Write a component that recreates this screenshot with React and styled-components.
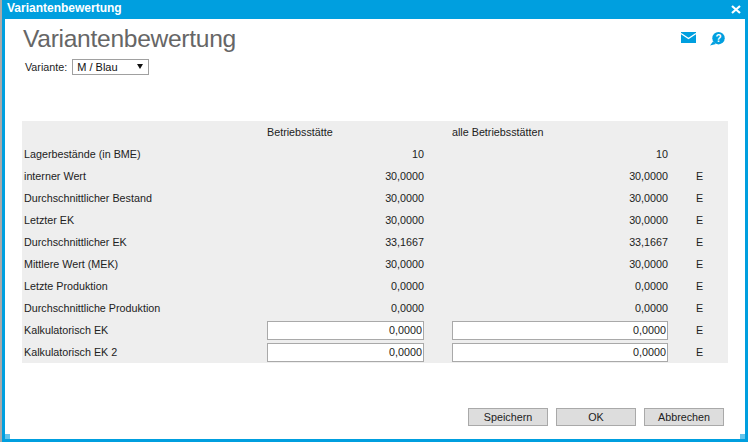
import React from "react";
import styled, { createGlobalStyle } from "styled-components";

const Global = createGlobalStyle`
  html, body { margin: 0; padding: 0; height: 100%; background: #a9a9a9; overflow: hidden; }
  body { font-family: "Liberation Sans", Arial, sans-serif; }
`;

const Dialog = styled.div`
  position: relative;
  box-sizing: border-box;
  width: 746px;
  height: 442px;
  margin-left: 2px;
  display: flex;
  flex-direction: column;
  background: #fff;
  border-style: solid;
  border-color: #009fdf;
  border-width: 0 3px 3px 3px;
`;

const TitleBar = styled.div`
  height: 19px;
  margin: 0 -3px;
  padding: 0 7px 0 5px;
  display: flex;
  align-items: center;
  justify-content: space-between;
  background: #009fdf;
  color: #fff;
  font-size: 12px;
  font-weight: bold;
`;

const TitleText = styled.span`
  margin-bottom: 4px;
`;

const Content = styled.div`
  flex: 1;
  display: flex;
  flex-direction: column;
  padding: 0 17px 13px 17px;
`;

const HeadRow = styled.div`
  display: flex;
  justify-content: space-between;
  align-items: flex-start;
  height: 39px;
`;

const Heading = styled.h1`
  margin: 4px 0 0 1px;
  font-size: 24.6px;
  letter-spacing: -0.3px;
  line-height: 32px;
  font-weight: normal;
  color: #666;
`;

const Icons = styled.div`
  display: flex;
  gap: 14px;
  margin: 13px 3px 0 0;
  align-items: flex-start;
`;

const VariantRow = styled.label`
  display: flex;
  align-items: center;
  gap: 5px;
  margin-left: 3px;
  height: 16px;
  margin-top: 1px;
  font-size: 10.75px;
  color: #222;
`;

const SelectWrap = styled.span`
  position: relative;
  display: block;
  width: 77px;
  height: 16px;
`;

const Select = styled.select`
  appearance: none;
  box-sizing: border-box;
  display: block;
  width: 100%;
  height: 100%;
  margin: 0;
  padding: 0 0 0 4px;
  border: 1px solid #a0a0a0;
  border-radius: 0;
  background: #fff;
  font: 11px "Liberation Sans", Arial, sans-serif;
  color: #111;
`;

const Arrow = styled.svg`
  position: absolute;
  right: 6px;
  top: 5px;
  pointer-events: none;
`;

const Table = styled.div`
  margin-top: 46px;
  background: #eee;
  font-size: 10.75px;
  color: #222;
`;

const Row = styled.div`
  display: grid;
  grid-template-columns: 245px 157px 28px 216px 1fr;
  height: 22px;
  align-items: center;
`;

const Label = styled.div`
  padding-left: 2px;
`;

const ColHead = styled.div``;

const Value = styled.div`
  text-align: right;
`;

const Unit = styled.div`
  grid-column: 5;
  padding-left: 28px;
`;

const NumberInput = styled.input`
  box-sizing: border-box;
  display: block;
  width: 100%;
  height: 19px;
  margin: 0;
  padding: 0 1px 0 2px;
  border: 1px solid #a9a9a9;
  border-radius: 0;
  background: #fff;
  outline: none;
  text-align: right;
  font: 10.75px "Liberation Sans", Arial, sans-serif;
  color: #222;
`;

const Footer = styled.div`
  margin-top: auto;
  display: flex;
  justify-content: flex-end;
  gap: 8px;
  padding-right: 4px;
`;

const Button = styled.button`
  box-sizing: border-box;
  width: 80px;
  height: 18px;
  margin: 0;
  padding: 0;
  border: 1px solid #a9a9a9;
  border-radius: 0;
  background: #ddd;
  font: 10.75px "Liberation Sans", Arial, sans-serif;
  color: #222;
`;

const Handle = styled.div`
  position: absolute;
  bottom: 0;
  ${(p) => (p.$side === "left" ? "left: 0;" : "right: 0;")}
  width: 5px;
  height: 5px;
  background: #66c5ec;
`;

const CloseIcon = () => (
  <svg width="10" height="9" viewBox="0 0 10 9" style={{ display: "block" }}>
    <path d="M1 1l8 7M9 1L1 8" stroke="#fff" strokeWidth="2.2" />
  </svg>
);

const MailIcon = () => (
  <svg width="15" height="11" viewBox="0 0 15 11" style={{ display: "block" }}>
    <rect width="15" height="11" fill="#009fdf" />
    <path d="M0 1.5l7.5 5 7.5-5" fill="none" stroke="#fff" strokeWidth="1.3" />
  </svg>
);

const HelpIcon = () => (
  <svg width="15" height="14" viewBox="0 0 15 14" style={{ display: "block" }}>
    <circle cx="8.5" cy="6.2" r="6.2" fill="#009fdf" />
    <path d="M3 9.5L0 13.5l6-1.5z" fill="#009fdf" />
    <text x="8.5" y="9.6" textAnchor="middle" fontSize="10" fontWeight="bold" fontFamily="Liberation Sans, Arial, sans-serif" fill="#fff">?</text>
  </svg>
);

const rows = [
  ["Lagerbestände (in BME)", "10", "10", ""],
  ["interner Wert", "30,0000", "30,0000", "E"],
  ["Durchschnittlicher Bestand", "30,0000", "30,0000", "E"],
  ["Letzter EK", "30,0000", "30,0000", "E"],
  ["Durchschnittlicher EK", "33,1667", "33,1667", "E"],
  ["Mittlere Wert (MEK)", "30,0000", "30,0000", "E"],
  ["Letzte Produktion", "0,0000", "0,0000", "E"],
  ["Durchschnittliche Produktion", "0,0000", "0,0000", "E"],
];

const inputs = ["Kalkulatorisch EK", "Kalkulatorisch EK 2"];

export default function App() {
  return (
    <>
      <Global />
      <Dialog>
        <TitleBar>
          <TitleText>Variantenbewertung</TitleText>
          <CloseIcon />
        </TitleBar>
        <Content>
          <HeadRow>
            <Heading>Variantenbewertung</Heading>
            <Icons>
              <MailIcon />
              <HelpIcon />
            </Icons>
          </HeadRow>
          <VariantRow>
            Variante:
            <SelectWrap>
              <Select defaultValue="M / Blau">
                <option>M / Blau</option>
              </Select>
              <Arrow width="6" height="5" viewBox="0 0 6 5">
                <path d="M0 0h6L3 5z" fill="#111" />
              </Arrow>
            </SelectWrap>
          </VariantRow>
          <Table>
            <Row>
              <span />
              <ColHead>Betriebsstätte</ColHead>
              <span />
              <ColHead>alle Betriebsstätten</ColHead>
            </Row>
            {rows.map(([label, a, b, unit]) => (
              <Row key={label}>
                <Label>{label}</Label>
                <Value>{a}</Value>
                <span />
                <Value>{b}</Value>
                <Unit>{unit}</Unit>
              </Row>
            ))}
            {inputs.map((label) => (
              <Row key={label}>
                <Label>{label}</Label>
                <NumberInput defaultValue="0,0000" />
                <span />
                <NumberInput defaultValue="0,0000" />
                <Unit>E</Unit>
              </Row>
            ))}
          </Table>
          <Footer>
            <Button>Speichern</Button>
            <Button>OK</Button>
            <Button>Abbrechen</Button>
          </Footer>
        </Content>
        <Handle $side="left" />
        <Handle $side="right" />
      </Dialog>
    </>
  );
}
